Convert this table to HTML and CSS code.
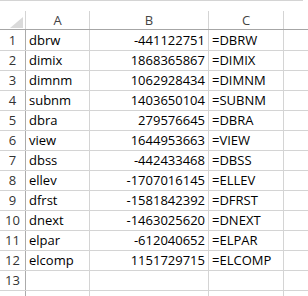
FILE: index.html
```html
<!DOCTYPE html>
<html>
<head>
<meta charset="utf-8">
<link rel="stylesheet" href="styles.css">
</head>
<body>
<div class="sheet">
  <div class="top-rule"></div>
  <div class="grid header">
    <div class="hcell corner"><span class="tri"></span></div>
    <div class="hcell">A</div>
    <div class="hcell">B</div>
    <div class="hcell">C</div>
    <div class="hcell last"></div>
  </div>
  <div class="grid row first"><div class="num">1</div><div class="cell">dbrw</div><div class="cell r">-441122751</div><div class="cell">=DBRW</div><div class="cell last"></div></div>
  <div class="grid row"><div class="num">2</div><div class="cell">dimix</div><div class="cell r">1868365867</div><div class="cell">=DIMIX</div><div class="cell last"></div></div>
  <div class="grid row"><div class="num">3</div><div class="cell">dimnm</div><div class="cell r">1062928434</div><div class="cell">=DIMNM</div><div class="cell last"></div></div>
  <div class="grid row"><div class="num">4</div><div class="cell">subnm</div><div class="cell r">1403650104</div><div class="cell">=SUBNM</div><div class="cell last"></div></div>
  <div class="grid row"><div class="num">5</div><div class="cell">dbra</div><div class="cell r">279576645</div><div class="cell">=DBRA</div><div class="cell last"></div></div>
  <div class="grid row"><div class="num">6</div><div class="cell">view</div><div class="cell r">1644953663</div><div class="cell">=VIEW</div><div class="cell last"></div></div>
  <div class="grid row"><div class="num">7</div><div class="cell">dbss</div><div class="cell r">-442433468</div><div class="cell">=DBSS</div><div class="cell last"></div></div>
  <div class="grid row"><div class="num">8</div><div class="cell">ellev</div><div class="cell r">-1707016145</div><div class="cell">=ELLEV</div><div class="cell last"></div></div>
  <div class="grid row"><div class="num">9</div><div class="cell">dfrst</div><div class="cell r">-1581842392</div><div class="cell">=DFRST</div><div class="cell last"></div></div>
  <div class="grid row"><div class="num">10</div><div class="cell">dnext</div><div class="cell r">-1463025620</div><div class="cell">=DNEXT</div><div class="cell last"></div></div>
  <div class="grid row"><div class="num">11</div><div class="cell">elpar</div><div class="cell r">-612040652</div><div class="cell">=ELPAR</div><div class="cell last"></div></div>
  <div class="grid row"><div class="num">12</div><div class="cell">elcomp</div><div class="cell r">1151729715</div><div class="cell">=ELCOMP</div><div class="cell last"></div></div>
  <div class="grid row"><div class="num">13</div><div class="cell"></div><div class="cell r"></div><div class="cell"></div><div class="cell last"></div></div>
  <div class="grid row tail"><div class="num"></div><div class="cell"></div><div class="cell r"></div><div class="cell"></div><div class="cell last"></div></div>
</div>
</body>
</html>
```

FILE: styles.css
```css
html, body {
  margin: 0;
  padding: 0;
  background: #ffffff;
}
.sheet {
  width: 308px;
  height: 296px;
  overflow: hidden;
  font-family: "Open Sans", "Liberation Sans", sans-serif;
  font-size: 13px;
  color: #000;
}
.top-rule {
  width: 303px;
  height: 1px;
  background: #d4d4d4;
}
.grid {
  display: grid;
  grid-template-columns: 26px 64px 119px 75px 1fr;
}
.header {
  padding-top: 10px;
  border-bottom: 1px solid #a6a6a6;
}
.hcell {
  height: 18px;
  line-height: 18px;
  text-align: center;
  color: #444;
  border-right: 1px solid #d4d4d4;
  display: flex;
  justify-content: center;
  align-items: flex-end;
}
.tri {
  width: 0;
  height: 0;
  border-left: 13px solid transparent;
  border-bottom: 11px solid #dadada;
  margin-left: 8px;
  margin-bottom: 1px;
}
.hcell.last, .cell.last {
  border-right: none;
}
.row {
  height: 19px;
  border-bottom: 1px solid #d4d4d4;
}
.row.first {
  height: 20px;
}
.num {
  text-align: center;
  color: #333;
  border-right: 1px solid #ababab;
  line-height: 19px;
}
.cell {
  border-right: 1px solid #d4d4d4;
  line-height: 19px;
  padding: 0 3px;
  white-space: nowrap;
  overflow: hidden;
}
.first .num, .first .cell {
  line-height: 20px;
}
.cell.r {
  text-align: right;
}
.tail {
  border-bottom: none;
}
```
